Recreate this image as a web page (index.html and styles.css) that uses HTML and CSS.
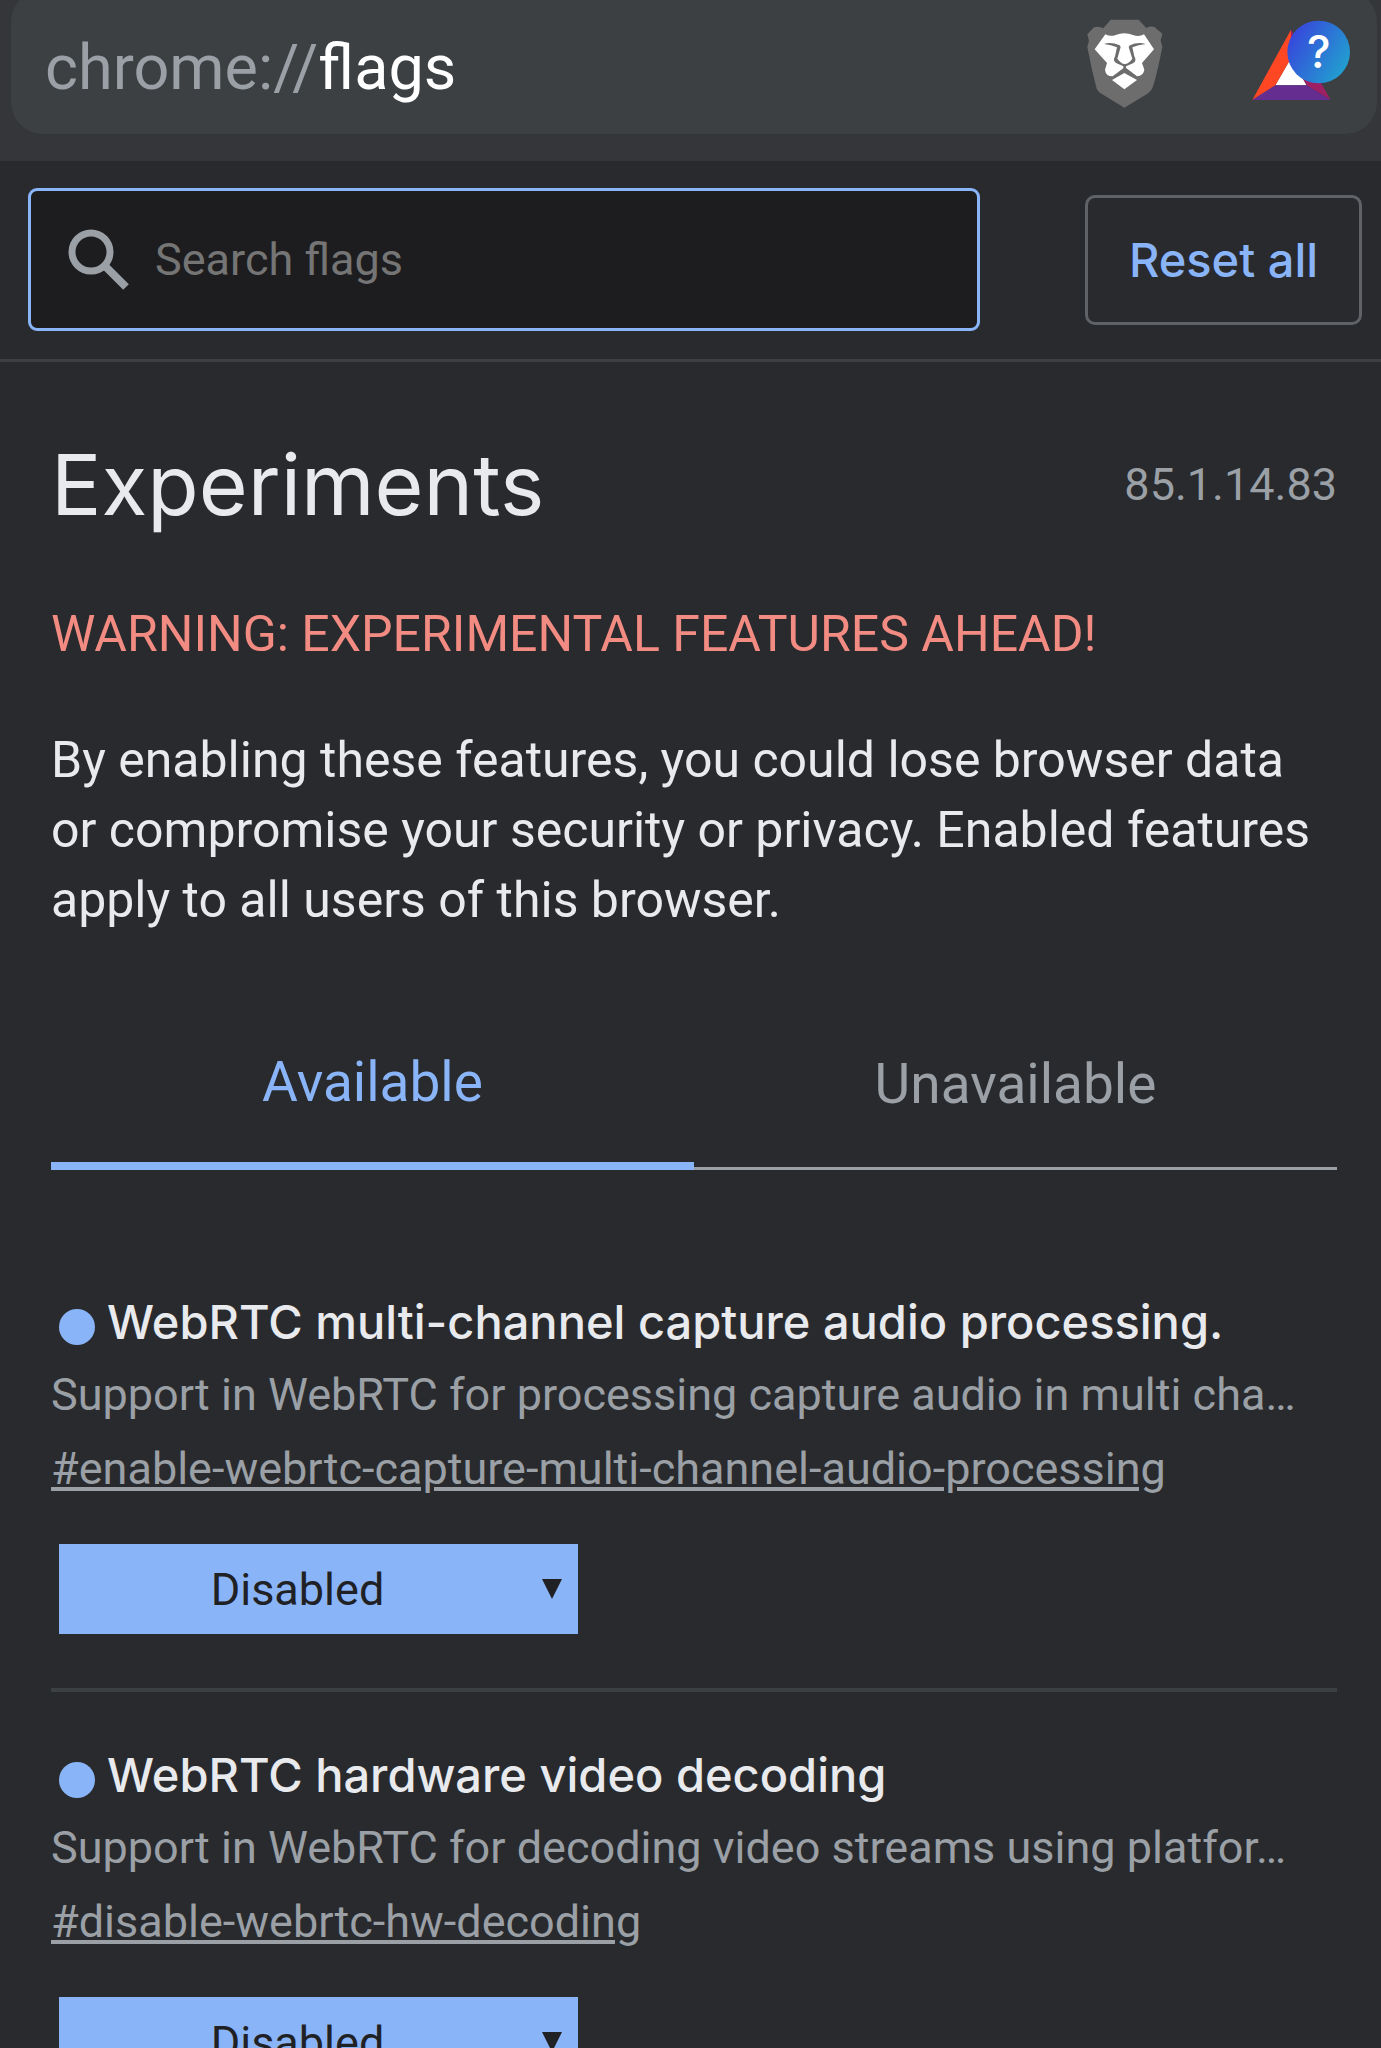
FILE: index.html
```html
<!DOCTYPE html>
<html lang="en">
<head>
    <meta charset="UTF-8">
    <meta name="viewport" content="width=device-width, initial-scale=1.0">
    <title>Experiments</title>
    <link rel="stylesheet" href="styles.css">
</head>
<body>
    <div class="toolbar">
        <div class="url-bar">
            <div class="url"><span class="scheme">chrome://</span>flags</div>
            <button class="icon-button" aria-label="Brave Shields">
                <svg width="78" height="94" viewBox="19 16 234 282">
                    <path fill="#6d6d6d" d="M93 30H177L200 55Q212 48 224 52L248 72L243 92L248 112L237 165Q226 213 218 236Q213 246 202 253L134 294L68 254Q55 247 51 237L37 180L23 112L28 93L23 74L43 53Q58 48 71 56Z"/>
                    <path fill="#fff" d="M77 74Q92 82 108 76Q134 66 160 76Q178 83 193 74L223 119L187 160L194 180Q192 198 172 200L136 173L99 200Q78 200 76 180L82 160L45 119Z"/>
                    <path fill="#6d6d6d" d="M73 103Q94 96 120 107L123 112L113 147Q124 162 135 163Q148 162 158 147L147 112L151 107Q175 96 198 103Q176 106 158 113L164 140Q172 155 160 161L139 170V176L169 199L151 205L135 184L117 205L102 199L131 176V170L111 161Q98 155 106 140L112 113Q94 106 73 103Z"/>
                    <path fill="#fff" d="M134 190L172 211L134 239L97 211Z"/>
                </svg>
            </button>
            <button class="icon-button" aria-label="Brave Rewards">
                <svg width="99" height="84" viewBox="636 56 297 252">
                    <defs>
                        <linearGradient id="badge" x1="0" y1="0.2" x2="1" y2="0.8">
                            <stop offset="0" stop-color="#3842dc"/>
                            <stop offset="1" stop-color="#20a5cf"/>
                        </linearGradient>
                    </defs>
                    <path fill="#fff" d="M753 170L706 252H800Z"/>
                    <path fill="#ff4724" d="M753 85V171L706 252L637 296Z"/>
                    <path fill="#9e1f63" d="M753 85L872 296L800 252L753 171Z"/>
                    <path fill="#662d91" d="M637 296L706 252H800L872 296Z"/>
                    <circle cx="836" cy="152" r="94" fill="url(#badge)"/>
                    <text class="badge-text" x="836" y="200" text-anchor="middle">?</text>
                </svg>
            </button>
        </div>
    </div>

    <header class="header">
        <div class="search">
            <svg class="search-icon" width="61" height="61" viewBox="0 0 61 61" fill="none" stroke="#9aa0a6">
                <circle cx="23" cy="23" r="19" stroke-width="7"/>
                <path d="M37 37L58 58" stroke-width="8"/>
            </svg>
            <input type="text" id="search" placeholder="Search flags" aria-label="Search flags">
        </div>
        <button class="reset">Reset all</button>
    </header>

    <main class="content">
        <div class="title-row">
            <h1>Experiments</h1>
            <span class="version">85.1.14.83</span>
        </div>
        <p class="warning">WARNING: EXPERIMENTAL FEATURES AHEAD!</p>
        <p class="blurb">By enabling these features, you could lose browser data or compromise your security or privacy. Enabled features apply to all users of this browser.</p>

        <div class="tabs" role="tablist">
            <button class="tab active-tab" role="tab" aria-selected="true">Available</button>
            <button class="tab" role="tab" aria-selected="false">Unavailable</button>
        </div>

        <div class="flag">
            <h2>WebRTC multi-channel capture audio processing.</h2>
            <p class="description">Support in WebRTC for processing capture audio in multi cha…</p>
            <a class="permalink" href="#enable-webrtc-capture-multi-channel-audio-processing">#enable-webrtc-capture-multi-channel-audio-processing</a>
            <div class="select-wrap">
                <select aria-label="WebRTC multi-channel capture audio processing.">
                    <option>Default</option>
                    <option>Enabled</option>
                    <option selected>Disabled</option>
                </select>
            </div>
        </div>

        <div class="flag">
            <h2>WebRTC hardware video decoding</h2>
            <p class="description">Support in WebRTC for decoding video streams using platfor…</p>
            <a class="permalink" href="#disable-webrtc-hw-decoding">#disable-webrtc-hw-decoding</a>
            <div class="select-wrap">
                <select aria-label="WebRTC hardware video decoding">
                    <option>Default</option>
                    <option>Enabled</option>
                    <option selected>Disabled</option>
                </select>
            </div>
        </div>
    </main>
</body>
</html>
```

FILE: styles.css
```css
* {
    box-sizing: border-box;
}
body {
    display: flex;
    flex-direction: column;
    height: 100vh;
    margin: 0;
    overflow: hidden;
    font-family: Roboto, sans-serif;
    font-size: 45px;
    background-color: #292a2d;
    color: #e8eaed;
}
button, input, select {
    margin: 0;
    font-family: inherit;
    font-size: inherit;
}
h1, h2, p {
    margin: 0;
}

/* address bar */
.toolbar {
    flex-shrink: 0;
    padding: 0 4px 27px 11px;
    background-color: #35363a;
}
.url-bar {
    display: flex;
    align-items: center;
    gap: 88px;
    height: 144px;
    margin-top: -10px;
    padding: 0 26px 0 34px;
    border-radius: 32px;
    background-color: #3c4043;
}
.url {
    flex: 1;
    padding-top: 10px;
    font-size: 63px;
    color: #fff;
}
.scheme {
    color: #9aa0a6;
}
.icon-button {
    padding: 0;
    border: none;
    background: none;
}
.icon-button svg {
    display: block;
}
.badge-text {
    font-family: Inter, sans-serif;
    font-size: 134px;
    font-weight: 500;
    fill: #fff;
}

/* search header */
.header {
    display: flex;
    flex-shrink: 0;
    align-items: center;
    gap: 105px;
    padding: 27px 19px 28px 28px;
    border-bottom: 3px solid #3c4043;
}
.search {
    display: flex;
    flex: 1;
    align-items: center;
    gap: 26px;
    height: 143px;
    padding: 0 37px;
    border: 3px solid #8ab4f8;
    border-radius: 9px;
    background-color: #1d1d1f;
}
.search-icon {
    flex-shrink: 0;
}
.search input {
    flex: 1;
    min-width: 0;
    padding: 0;
    border: none;
    outline: none;
    background: none;
    color: #e8eaed;
}
.search input::placeholder {
    color: #757575;
}
.reset {
    width: 277px;
    height: 130px;
    padding: 0;
    border: 3px solid #5f6368;
    border-radius: 10px;
    background: none;
    font-family: Inter, sans-serif;
    font-size: 47px;
    font-weight: 500;
    color: #8ab4f8;
}

/* page content */
.content {
    flex: 1;
    min-height: 0;
    padding: 74px 44px 0 51px;
    overflow: hidden;
}
.title-row {
    display: flex;
    align-items: center;
    justify-content: space-between;
    height: 96px;
}
h1 {
    font-family: Inter, sans-serif;
    font-size: 84px;
    font-weight: 400;
}
.version {
    color: #9aa0a6;
}
.warning {
    margin-top: 67px;
    font-size: 50px;
    line-height: 70px;
    color: #f28b82;
}
.blurb {
    margin-top: 56px;
    font-size: 50px;
    line-height: 70px;
}
.tabs {
    display: flex;
    height: 181px;
    margin-top: 54px;
}
.tab {
    flex: 1;
    padding: 12px 0 0;
    border: none;
    border-bottom: 3px solid #9aa0a6;
    background: none;
    font-size: 55px;
    color: #9aa0a6;
}
.active-tab {
    border-bottom: 8px solid #8ab4f8;
    color: #8ab4f8;
}

/* flags */
.flag {
    height: 453px;
    padding-top: 45px;
    border-bottom: 4px solid #3c4043;
}
.tabs + .flag {
    margin-top: 69px;
}
.flag h2 {
    display: flex;
    align-items: center;
    gap: 12px;
    height: 74px;
    padding: 0 8px;
    font-family: Inter, sans-serif;
    font-size: 47px;
    font-weight: 500;
    white-space: nowrap;
}
.flag h2::before {
    content: "";
    width: 36px;
    height: 36px;
    margin-top: 12px;
    border-radius: 50%;
    background-color: #8ab4f8;
}
.description {
    line-height: 74px;
    white-space: nowrap;
    color: #9aa0a6;
}
.permalink {
    display: block;
    line-height: 74px;
    color: #9aa0a6;
}
.select-wrap {
    position: relative;
    width: 519px;
    margin: 38px 8px 0;
}
.select-wrap::after {
    content: "";
    position: absolute;
    top: 35px;
    right: 16px;
    border: 10px solid transparent;
    border-top: 20px solid #202124;
    border-bottom: none;
    pointer-events: none;
}
select {
    display: block;
    width: 100%;
    height: 90px;
    padding: 0 42px 0 0;
    border: none;
    border-radius: 0;
    appearance: none;
    background-color: #8ab4f8;
    color: #202124;
    text-align: center;
    text-align-last: center;
}
```
